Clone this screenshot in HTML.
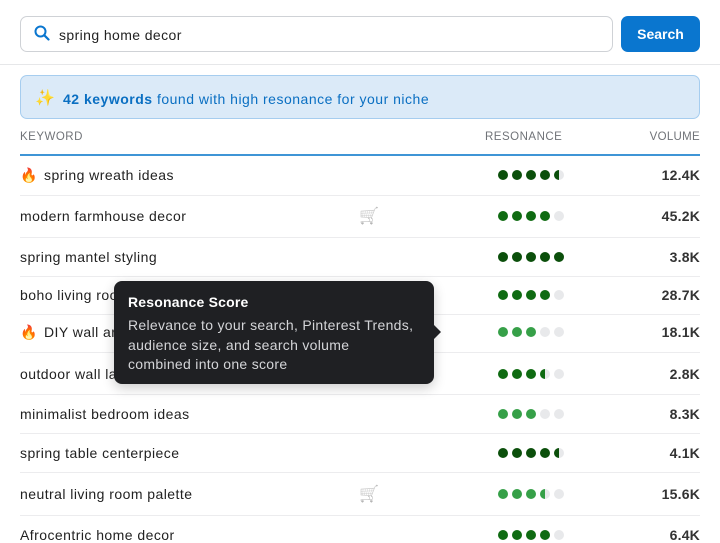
<!DOCTYPE html><html><head><style>
body{margin:0;width:720px;height:540px;overflow:hidden;background:#fff;font-family:"Liberation Sans",sans-serif;position:relative;color:#222}
.a{position:absolute}
.sb{left:20px;top:16px;width:591px;height:34px;border:1px solid #cfd2d6;border-radius:7px}
.btn{left:621px;top:16px;width:79px;height:36px;background:#0a76cf;border-radius:7px;color:#fff;font-size:14px;font-weight:bold;text-align:center;line-height:36px}
.ban{left:20px;top:75px;width:678px;height:42px;background:#dbeaf8;border:1px solid #a6cdef;border-radius:7px}
.hd{font-size:11.5px;color:#707378;letter-spacing:.5px;top:131px}
.row{position:absolute;left:20px;width:680px;font-size:14px;letter-spacing:.45px}
.sep{position:absolute;left:20px;width:680px;height:1px;background:#ececee}
.dots{position:absolute;left:498px;display:flex;gap:4px}
.dots i{width:10px;height:10px;border-radius:50%;background:#e8e9eb;display:block}
.vol{position:absolute;right:20px;font-weight:bold;color:#333;font-size:14px;letter-spacing:.2px}
</style></head><body>
<div class="a sb"></div>
<svg class="a" style="left:34px;top:25px" width="16" height="16" viewBox="0 0 16 16"><circle cx="6.5" cy="6.5" r="5" fill="none" stroke="#0a76cf" stroke-width="2"/><path d="M10.2 10.2L14.5 14.5" stroke="#0a76cf" stroke-width="2.2" stroke-linecap="round"/></svg>
<div class="a" style="left:59px;top:27px;font-size:14px;color:#222;letter-spacing:.4px">spring home decor</div>
<div class="a btn">Search</div>
<div class="a" style="left:0;top:64px;width:720px;height:1px;background:#e6e7e9"></div>
<div class="a ban"></div>
<div class="a" style="left:35px;top:88px;font-size:16px;color:#f2c230">✨</div>
<div class="a" style="left:63px;top:91px;font-size:14px;color:#0a6fc2;letter-spacing:.5px"><b>42 keywords</b> found with high resonance for your niche</div>
<div class="a hd" style="left:20px">KEYWORD</div>
<div class="a hd" style="left:485px">RESONANCE</div>
<div class="a hd" style="right:20px;letter-spacing:.3px">VOLUME</div>
<div class="a" style="left:20px;top:154px;width:680px;height:2px;background:#3f95d6"></div>
<div id="rows"></div>
<script>
var D='#0b4f0b',M='#0f6b12',L='#36a048',E='#e8e9eb';
function h(c){return 'linear-gradient(90deg,'+c+' 50%,'+E+' 50%)'}
var F='<span style="display:inline-block;width:24px;letter-spacing:0">🔥</span>';
var rows=[
[F+'spring wreath ideas',175,[D,D,D,D,h(D)],'12.4K',0],
['modern farmhouse decor',216,[M,M,M,M,E],'45.2K',1],
['spring mantel styling',257,[D,D,D,D,D],'3.8K',0],
['boho living room',295,[M,M,M,M,E],'28.7K',0],
[F+'DIY wall art',332,[L,L,L,E,E],'18.1K',0],
['outdoor wall lanterns',374,[M,M,M,h(M),E],'2.8K',0],
['minimalist bedroom ideas',414,[L,L,L,E,E],'8.3K',0],
['spring table centerpiece',453,[D,D,D,D,h(D)],'4.1K',0],
['neutral living room palette',494,[L,L,L,h(L),E],'15.6K',1],
['Afrocentric home decor',535,[M,M,M,M,E],'6.4K',0]];
var seps=[195,237,276,314,352,394,433,472,515];
var o='';
rows.forEach(function(r){var t=r[1]-8;
o+='<div class="row" style="top:'+t+'px">'+r[0]+'</div>';
if(r[4])o+='<div class="a" style="left:359px;top:'+(t-2)+'px;font-size:16px;filter:grayscale(1) opacity(.6)">🛒</div>';
o+='<div class="dots" style="top:'+(r[1]-5)+'px">'+r[2].map(function(c){return '<i style="background:'+c+'"></i>'}).join('')+'</div>';
o+='<div class="vol" style="top:'+t+'px">'+r[3]+'</div>';});
seps.forEach(function(s){o+='<div class="sep" style="top:'+s+'px"></div>'});
document.getElementById('rows').innerHTML=o;
</script>
<div class="a" style="left:114px;top:281px;width:320px;height:103px;background:#1f2023;border-radius:8px;box-shadow:0 4px 12px rgba(0,0,0,.2)"></div>
<div class="a" style="left:434px;top:325px;width:0;height:0;border-top:7px solid transparent;border-bottom:7px solid transparent;border-left:7px solid #1f2023"></div>
<div class="a" style="left:128px;top:294px;color:#fff;font-size:14px;font-weight:bold;letter-spacing:.2px">Resonance Score</div>
<div class="a" style="left:128px;top:316px;color:#d4d5d8;font-size:14px;line-height:19.5px;width:305px;letter-spacing:.3px">Relevance to your search, Pinterest Trends,<br>audience size, and search volume<br>combined into one score</div>
</body></html>
